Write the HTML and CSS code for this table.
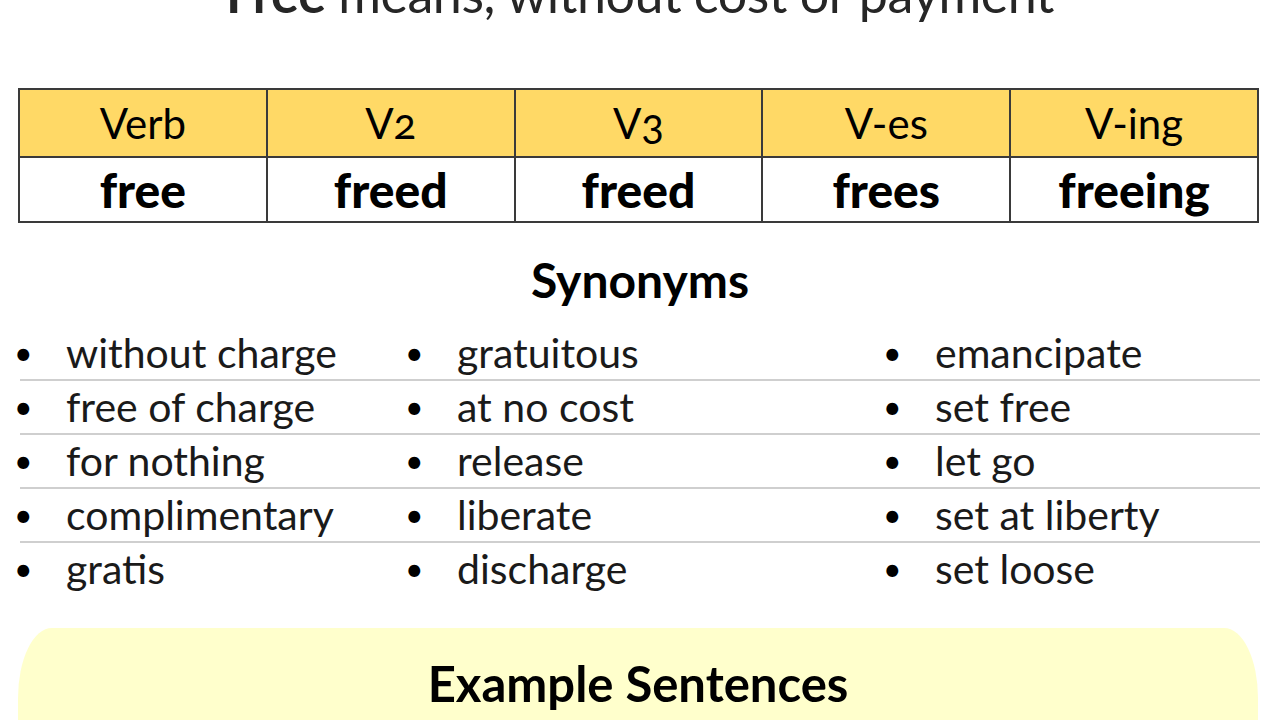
FILE: index.html
```html
<!DOCTYPE html>
<html>
<head>
<meta charset="utf-8">
<link rel="stylesheet" href="styles.css">
</head>
<body>
<div class="page">
  <h1 class="title"><b>Free</b> means, without cost or payment</h1>
  <table class="forms">
    <tr class="head">
      <td>Verb</td><td>V2</td><td>V3</td><td>V-es</td><td>V-ing</td>
    </tr>
    <tr class="body">
      <td>free</td><td>freed</td><td>freed</td><td>frees</td><td>freeing</td>
    </tr>
  </table>
  <h2 class="syn-title">Synonyms</h2>
  <div class="syn">
    <div class="row"><span class="c1">without charge</span><span class="c2">gratuitous</span><span class="c3">emancipate</span></div>
    <div class="row"><span class="c1">free of charge</span><span class="c2">at no cost</span><span class="c3">set free</span></div>
    <div class="row"><span class="c1">for nothing</span><span class="c2">release</span><span class="c3">let go</span></div>
    <div class="row"><span class="c1">complimentary</span><span class="c2">liberate</span><span class="c3">set at liberty</span></div>
    <div class="row last"><span class="c1">gratis</span><span class="c2">discharge</span><span class="c3">set loose</span></div>
  </div>
  <div class="examples">
    <h2 class="ex-title">Example Sentences</h2>
  </div>
</div>
</body>
</html>
```
FILE: styles.css
```css
html, body {
  margin: 0;
  padding: 0;
  background: #ffffff;
  overflow: hidden;
}
body {
  width: 1280px;
  height: 720px;
  font-family: "Lato", "Open Sans", sans-serif;
  color: #111;
}
.page {
  display: flex;
  flex-direction: column;
  align-items: stretch;
  height: 720px;
  overflow: hidden;
}
.title {
  margin: -33px 0 0 0;
  height: 121px;
  font-size: 52px;
  line-height: 52px;
  font-weight: 400;
  text-align: center;
  color: #262626;
  letter-spacing: -0.5px;
  white-space: nowrap;
}
.title b {
  font-weight: 700;
}
.forms {
  margin: 0 0 0 18px;
  width: 1241px;
  border-collapse: collapse;
  table-layout: fixed;
  font-family: "Lato", "Open Sans", sans-serif;
}
.forms td {
  border: 2px solid #3a3a3a;
  text-align: center;
  color: #000;
  padding: 0;
}
.head td {
  background: #ffd966;
  height: 66px;
  font-size: 42px;
  font-variant-numeric: oldstyle-nums;
}
.body td {
  height: 63px;
  font-size: 48px;
  font-weight: 900;
}
.syn-title {
  margin: 27px 0 0 0;
  height: 77px;
  font-size: 48px;
  line-height: 60px;
  font-weight: 700;
  text-align: center;
  color: #000;
}
.syn {
  margin: 0 20px 0 0;
  display: flex;
  flex-direction: column;
}
.row {
  display: grid;
  grid-template-columns: 391px 478px 1fr;
  height: 52px;
  border-bottom: 2px solid #cfcfcf;
  margin-left: 20px;
  font-size: 41px;
  line-height: 52px;
  color: #1a1a1a;
}
.row.last {
  border-bottom: none;
}
.row span {
  position: relative;
  padding-left: 46px;
  white-space: nowrap;
}
.row span::before {
  content: "\2022";
  position: absolute;
  left: -6px;
  top: 0;
  font-size: 32px;
  color: #000;
}
.examples {
  margin: 33px 22px 0 18px;
  height: 92px;
  background: #ffffcc;
  border-radius: 34px 34px 0 0 / 70px 70px 0 0;
  display: flex;
  flex-direction: column;
}
.ex-title {
  margin: 28px 0 0 0;
  font-size: 49px;
  line-height: 54px;
  font-weight: 700;
  text-align: center;
  color: #000;
}
```
